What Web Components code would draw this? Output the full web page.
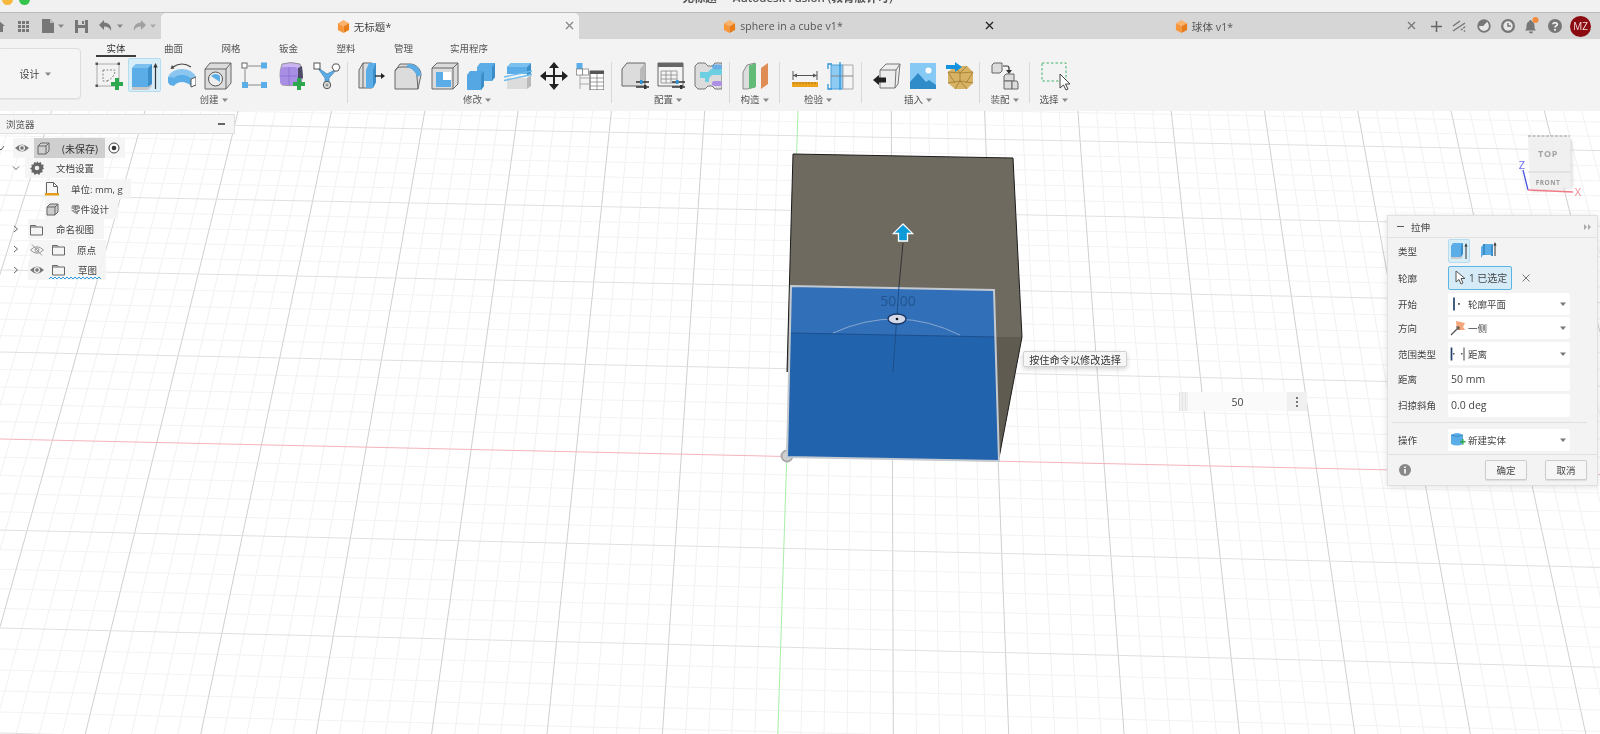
<!DOCTYPE html>
<html lang="zh">
<head>
<meta charset="utf-8">
<title>Autodesk Fusion</title>
<style>
  html, body { margin: 0; height: 100%; overflow: hidden; background: #fff; }
  body { font-family: "Open Sans", "Noto Sans CJK SC", sans-serif; color: #555; display: flex; flex-direction: column; width: 1600px; height: 734px; filter: blur(.3px); }
</style>
</head>
<body>
<fu-title-bar>无标题* - Autodesk Fusion (教育版许可)</fu-title-bar>

<fu-tab-bar>
  <fu-icon slot="quick" name="home" size="14" style="margin-left:-9px"></fu-icon>
  <fu-icon slot="quick" name="grid" size="13" style="margin-left:12px"></fu-icon>
  <fu-icon slot="quick" name="file" size="14" style="margin-left:11px"></fu-icon>
  <fu-icon slot="quick" name="caret" size="6" style="margin-left:3px"></fu-icon>
  <fu-icon slot="quick" name="save" size="13" style="margin-left:11px"></fu-icon>
  <fu-icon slot="quick" name="undo" size="14" style="margin-left:11px"></fu-icon>
  <fu-icon slot="quick" name="caret" size="6" style="margin-left:4px"></fu-icon>
  <fu-icon slot="quick" name="redo" size="14" style="margin-left:9px;opacity:.55"></fu-icon>
  <fu-icon slot="quick" name="caret" size="6" style="margin-left:4px;opacity:.55"></fu-icon>
  <fu-doc-tab active close="#888" width="418">无标题*</fu-doc-tab>
  <fu-doc-tab close="#222" width="420">sphere in a cube v1*</fu-doc-tab>
  <fu-doc-tab close="#777" width="422">球体 v1*</fu-doc-tab>
  <fu-icon slot="tray" name="plus" size="13" style="margin-left:8.500px"></fu-icon>
  <fu-icon slot="tray" name="sync" size="15" style="margin-left:9.500px"></fu-icon>
  <fu-icon slot="tray" name="gauge" size="14" style="margin-left:10px"></fu-icon>
  <fu-icon slot="tray" name="clock" size="14" style="margin-left:10px"></fu-icon>
  <fu-icon slot="tray" name="bell" size="18" style="margin-left:7px"></fu-icon>
  <fu-icon slot="tray" name="help" size="14" style="margin-left:7.500px"></fu-icon>
  <fu-avatar slot="tray" style="margin-left:8.500px">MZ</fu-avatar>
</fu-tab-bar>

<fu-ribbon>
  <fu-ribbon-tab slot="tabs" active>实体</fu-ribbon-tab>
  <fu-ribbon-tab slot="tabs">曲面</fu-ribbon-tab>
  <fu-ribbon-tab slot="tabs">网格</fu-ribbon-tab>
  <fu-ribbon-tab slot="tabs">钣金</fu-ribbon-tab>
  <fu-ribbon-tab slot="tabs">塑料</fu-ribbon-tab>
  <fu-ribbon-tab slot="tabs">管理</fu-ribbon-tab>
  <fu-ribbon-tab slot="tabs" style="margin-left:8px">实用程序</fu-ribbon-tab>

  <fu-tool-group label="创建" style="--w:253px;--pl:0px;--lp:15px">
    <fu-icon name="sketch"></fu-icon><fu-tool-active><fu-icon name="extrude"></fu-icon></fu-tool-active><fu-icon name="revolve"></fu-icon><fu-icon name="hole"></fu-icon><fu-icon name="pattern"></fu-icon><fu-icon name="form"></fu-icon><fu-icon name="joint"></fu-icon>
  </fu-tool-group>
  <fu-tool-group label="修改" style="--w:264px;--pl:10px">
    <fu-icon name="press"></fu-icon><fu-icon name="fillet"></fu-icon><fu-icon name="shell"></fu-icon><fu-icon name="combine"></fu-icon><fu-icon name="split"></fu-icon><fu-icon name="move"></fu-icon><fu-icon name="params"></fu-icon>
  </fu-tool-group>
  <fu-tool-group label="配置" style="--w:118px;--pl:9px">
    <fu-icon name="config"></fu-icon><fu-icon name="table"></fu-icon><fu-icon name="script"></fu-icon>
  </fu-tool-group>
  <fu-tool-group label="构造" style="--w:50px;--pl:12px;--lp:0px">
    <fu-icon name="plane"></fu-icon>
  </fu-tool-group>
  <fu-tool-group label="检验" style="--w:82px;--pl:11px">
    <fu-icon name="measure"></fu-icon><fu-icon name="section"></fu-icon>
  </fu-tool-group>
  <fu-tool-group label="插入" style="--w:118px;--pl:11px">
    <fu-icon name="derive"></fu-icon><fu-icon name="image"></fu-icon><fu-icon name="mesh"></fu-icon>
  </fu-tool-group>
  <fu-tool-group label="装配" style="--w:50px;--pl:11px;--lp:0px">
    <fu-icon name="assemble"></fu-icon>
  </fu-tool-group>
  <fu-tool-group label="选择" plain style="--w:50px;--pl:11px;--lp:3px">
    <fu-icon name="select"></fu-icon>
  </fu-tool-group>
</fu-ribbon>

<fu-viewport>
  <fu-scene></fu-scene>

  <fu-browser title="浏览器">
    <fu-tree-row left="0" check>
      <fu-icon name="eye" size="14" style="margin-left:15px"></fu-icon>
      <fu-current style="margin-left:5px"><fu-icon name="body" size="13"></fu-icon><span style="margin-left:12px">(未保存)</span></fu-current>
      <fu-icon name="radio" size="12" style="margin-left:3px;margin-right:5px"></fu-icon>
    </fu-tree-row>
    <fu-tree-row left="25" chev>
      <fu-icon name="gear" size="14" style="margin-left:5px"></fu-icon>
      <span style="margin-left:12px;margin-right:10px">文档设置</span>
    </fu-tree-row>
    <fu-tree-row left="45">
      <fu-icon name="units" size="14"></fu-icon>
      <span style="margin-left:12px;margin-right:8px">单位: mm, g</span>
    </fu-tree-row>
    <fu-tree-row left="45">
      <fu-icon name="body2" size="13" style="margin-left:1px"></fu-icon>
      <span style="margin-left:12px;margin-right:9px">零件设计</span>
    </fu-tree-row>
    <fu-tree-row left="28" chev>
      <fu-icon name="folder" size="13" style="margin-left:2px"></fu-icon>
      <span style="margin-left:13px;margin-right:10px">命名视图</span>
    </fu-tree-row>
    <fu-tree-row left="30" chev>
      <fu-icon name="eyeoff" size="14"></fu-icon>
      <fu-icon name="folder" size="13" style="margin-left:8px"></fu-icon>
      <span style="margin-left:12px;margin-right:10px">原点</span>
    </fu-tree-row>
    <fu-tree-row left="28" chev wavy>
      <fu-icon name="eye" size="14" style="margin-left:2px"></fu-icon>
      <fu-icon name="folder" size="13" style="margin-left:8px"></fu-icon>
      <span style="margin-left:13px;margin-right:9px">草图</span>
    </fu-tree-row>
  </fu-browser>

  <fu-tooltip>按住命令以修改选择</fu-tooltip>
  <fu-length-input>50</fu-length-input>

  <fu-dialog title="拉伸">
    <fu-form-row label="类型" h="24">
      <fu-toggle-icon on><fu-icon name="typeA" size="18"></fu-icon></fu-toggle-icon>
      <fu-toggle-icon><fu-icon name="typeB" size="18"></fu-icon></fu-toggle-icon>
    </fu-form-row>
    <fu-form-row label="轮廓" h="24">
      <fu-selection>1 已选定</fu-selection>
    </fu-form-row>
    <fu-form-row label="开始" h="22"><fu-field drop><fu-icon slot="icon" name="startProfile" size="16"></fu-icon>轮廓平面</fu-field></fu-form-row>
    <fu-form-row label="方向" h="22"><fu-field drop><fu-icon slot="icon" name="direction" size="16"></fu-icon>一侧</fu-field></fu-form-row>
    <fu-form-row label="范围类型" h="23"><fu-field drop><fu-icon slot="icon" name="extent" size="16"></fu-icon>距离</fu-field></fu-form-row>
    <fu-form-row label="距离" h="23"><fu-field>50 mm</fu-field></fu-form-row>
    <fu-form-row label="扫掠斜角" h="23"><fu-field>0.0 deg</fu-field></fu-form-row>
    <fu-form-row label="操作" h="22" split><fu-field drop><fu-icon slot="icon" name="newBody" size="16"></fu-icon>新建实体</fu-field></fu-form-row>
    <fu-button slot="footer" style="margin-left:auto">确定</fu-button>
    <fu-button slot="footer" style="margin-left:18px">取消</fu-button>
  </fu-dialog>
</fu-viewport>

<script>
const BLUE = '#5aade6', BLUED = '#3b8ec8', GR = '#dcdcdc', GRD = '#b9b9b9', ST = '#666';
const PLUS = (x, y) => `<path d="M${x - 2} ${y - 6}h4v4h4v4h-4v4h-4v-4h-4v-4h4z" fill="#2ea84f"/>`;

// hand-drawn toolbar and tree icons, keyed by name
const ICONS = {
  home: `<svg viewBox="0 0 14 14"><path d="M7 1 14 7h-2v6H2V7H0z" fill="#777"/></svg>`,
  grid: `<svg viewBox="0 0 13 13" fill="#777"><path d="M1 1h3v3H1zM5 1h3v3H5zM9 1h3v3H9zM1 5h3v3H1zM5 5h3v3H5zM9 5h3v3H9zM1 9h3v3H1zM5 9h3v3H5zM9 9h3v3H9z"/></svg>`,
  file: `<svg viewBox="0 0 14 14"><path d="M1 0h8l4 4v10H1z" fill="#777"/><path d="M9 0v4h4z" fill="#bbb"/></svg>`,
  caret: `<svg viewBox="0 0 6 6"><path d="M0 1.500h6L3 5z" fill="#888"/></svg>`,
  save: `<svg viewBox="0 0 13 13"><path d="M0 0h13v13H0z" fill="#777"/><path d="M3 0h7v5H3zM3 8h7v5H3z" fill="#d6d6d6"/><path d="M7 1h2v3H7z" fill="#777"/></svg>`,
  undo: `<svg viewBox="0 0 14 14"><path d="M5 1 0 6l5 5V7.500c4 0 6 1.500 7 4.500 1-5-2-8-7-8.500z" fill="#777"/></svg>`,
  redo: `<svg viewBox="0 0 14 14"><path d="M9 1l5 5-5 5V7.500c-4 0-6 1.500-7 4.500-1-5 2-8 7-8.500z" fill="#777"/></svg>`,
  plus: `<svg viewBox="0 0 13 13"><path d="M6.500 1v11M1 6.500h11" stroke="#666" stroke-width="1.500"/></svg>`,
  sync: `<svg viewBox="0 0 15 15" fill="none" stroke="#777" stroke-width="1.500"><path d="M1 7 8 2M1 12 13 4"/><path d="M9 11l5-4M12 12.500l1-1" stroke-dasharray="2 1"/></svg>`,
  gauge: `<svg viewBox="0 0 14 14"><circle cx="7" cy="7" r="5.800" fill="#e6e6e6" stroke="#777" stroke-width="1.800"/><path d="M1 7a6 6 0 0 1 6-6l4 2-4 4z" fill="#777"/><path d="M7 7l3.500-3.500" stroke="#eee" stroke-width="1.200"/></svg>`,
  clock: `<svg viewBox="0 0 14 14"><circle cx="7" cy="7" r="7" fill="#777"/><circle cx="7" cy="7" r="4.700" fill="#e8e8e8"/><path d="M7 4v3.200h3" stroke="#666" stroke-width="1.300" fill="none"/></svg>`,
  bell: `<svg viewBox="0 0 18 18"><path d="M7 4.500c-2.500 1-2.500 3.500-2.500 5.500 0 2-1 3-1.500 3.500h11c-.5-.5-1.500-1.500-1.500-3.500 0-2.500 0-4.500-2.500-5.500a1.500 1.500 0 0 0-3 0zM7 14.500h4a2 2 0 0 1-4 0z" fill="#777"/><circle cx="13.500" cy="3" r="3" fill="#f58a3c"/></svg>`,
  help: `<svg viewBox="0 0 14 14"><circle cx="7" cy="7" r="7" fill="#777"/><path d="M4.800 5.300C5 3.300 9.300 3.300 9.300 5.500 9.300 7 7 7 7 8.600" fill="none" stroke="#fff" stroke-width="1.500"/><circle cx="7" cy="10.700" r="1" fill="#fff"/></svg>`,
  sketch: `<svg viewBox="0 0 28 28"><path d="M2 2h22v22H2z" fill="none" stroke="#aaa"/><g fill="#555"><rect x="0.500" y="0.500" width="2.500" height="2.500"/><rect x="22.500" y="0.500" width="2.500" height="2.500"/><rect x="0.500" y="22.500" width="2.500" height="2.500"/></g><path d="M8 8v11h6M8 8h12c0 5-3 9-8 11" fill="none" stroke="#888" stroke-dasharray="2 1.500"/>${PLUS(22, 22)}</svg>`,
  extrude: `<svg viewBox="0 0 28 28"><path d="M1 6l4-4h16v20l-4 3H1z" fill="${BLUE}"/><path d="M17 6l4-4v20l-4 3z" fill="${BLUED}"/><path d="M1 6l4-4h16l-4 4z" fill="#7cc0ee"/><path d="M1 25h16l4-3v2l-4 4H1z" fill="#c8c8c8"/><path d="M24.500 27V4" stroke="#333" stroke-width="1.200"/><path d="M24.500 1l2.200 4.500h-4.400z" fill="#333"/></svg>`,
  revolve: `<svg viewBox="0 0 28 28"><path d="M5 5Q14 -1 23 5" fill="none" stroke="#444" stroke-width="1.200"/><path d="M4 3l-1.500 4 4-.5z" fill="#444"/><path d="M0 15Q4 7 14 7q10 0 14 8l-5 2q-3-4-9-4-6 0-9 4z" fill="#8ac6ef"/><path d="M0 15v5q0 1 2 3l4 1c.5-3 0-5-1-7q3-4 9-4 6 0 9 4l0 8 0-8" fill="${BLUE}"/><path d="M5 17q3-4 9-4 6 0 9 4v7c-3-3-6-4-9-4s-6 1-8 4l-1-2z" fill="${BLUE}"/><path d="M23 17l5-2v8l-5 2z" fill="#fff" stroke="#555"/></svg>`,
  hole: `<svg viewBox="0 0 28 28"><path d="M1 7l5-6h21v20l-5 6H1z" fill="${GR}" stroke="${ST}"/><path d="M1 7h21v20M22 7l5-6" fill="none" stroke="${ST}"/><circle cx="11.500" cy="17" r="7" fill="#eee" stroke="#555"/><path d="M7 14a6 6 0 0 1 9 0l0 6z" fill="${BLUE}"/></svg>`,
  pattern: `<svg viewBox="0 0 28 28"><path d="M7 4h13M4 7v13M7 23h13" stroke="#888" stroke-width="1"/><rect x="1" y="1" width="5" height="5" fill="#fff" stroke="#666"/><rect x="20" y="0.500" width="6" height="6" fill="${BLUE}"/><rect x="1" y="20" width="6" height="6" fill="${BLUE}"/><rect x="20" y="20" width="6" height="6" fill="${BLUE}"/></svg>`,
  form: `<svg viewBox="0 0 28 28"><path d="M5 2q9-3 18 0 4 9 1 20-10 3-19 1-4-10 0-21z" fill="#c9b5f0" stroke="#777" stroke-width=".7"/><path d="M3 9q1-4 4-4h11q3 0 3 4v11q0 3-3 3H7q-4 0-4-3z" fill="#a98fe4"/><path d="M3 14h18M12 5v18" stroke="#8c70d0" stroke-width=".8"/><path d="M21 6l4-2 1 12-5 2z" fill="#4c4a66"/>${PLUS(22, 22)}</svg>`,
  joint: `<svg viewBox="0 0 28 28"><path d="M4 5 14 12l10-5-8 9v5h-4v-5z" fill="${BLUE}" stroke="#3a7fb0" stroke-width=".7"/><rect x="1" y="1" width="6" height="6" fill="#fff" stroke="#555"/><path d="M21 2h4l2 3-2 4h-4l-2-4z" fill="#fff" stroke="#555"/><circle cx="14" cy="23" r="3.700" fill="#ddd" stroke="#555"/><circle cx="14" cy="23" r="1.500" fill="#999"/></svg>`,
  press: `<svg viewBox="0 0 28 28"><path d="M1 8l4-7h9v25H1z" fill="#ddd" stroke="${ST}"/><path d="M5 1v25" stroke="${ST}" fill="none"/><path d="M8 26V8l3-7h7v19l-3 6z" fill="${BLUE}"/><path d="M15 8l3-7v19l-3 6z" fill="${BLUED}"/><path d="M17 14h7" stroke="#222" stroke-width="1.300"/><path d="M23 11l4 3-4 3z" fill="#222"/></svg>`,
  fillet: `<svg viewBox="0 0 28 28"><path d="M1 9l5-7h10c6 0 11 5 11 11l-3 14H1z" fill="${GR}" stroke="${ST}"/><path d="M1 9Q2 5 8 5h4c7 0 11 4 11 10l1 12" fill="none" stroke="${ST}"/><path d="M12 5c1-2 2-3 4-3 6 0 11 5 11 11l-4 2c-1-5-5-9-11-10z" fill="${BLUE}"/></svg>`,
  shell: `<svg viewBox="0 0 28 28"><path d="M1 6l5-5h21v21l-5 5H1z" fill="${GR}" stroke="${ST}"/><path d="M5 10h15v15H5z" fill="#fff"/><path d="M5 10h7v8h8v7H5z" fill="${BLUE}"/><path d="M1 6h21v21M22 6l5-5" fill="none" stroke="${ST}"/></svg>`,
  combine: `<svg viewBox="0 0 28 28"><path d="M10 5l3-4h15v14l-3 4H10z" fill="${BLUE}"/><path d="M25 5l3-4v14l-3 4z" fill="${BLUED}"/><path d="M0 13l3-4h14v15l-3 4H0z" fill="#54a7e2"/><path d="M14 13l3-4v15l-3 4z" fill="${BLUED}"/></svg>`,
  split: `<svg viewBox="0 0 28 28"><path d="M3 5l4-4h20v11H3z" fill="${BLUE}"/><path d="M23 5l4-4v10l-4 3z" fill="${BLUED}"/><path d="M3 5l4-4h20l-4 4z" fill="#7cc0ee"/><path d="M3 16h20v11H3z" fill="${GR}"/><path d="M23 16l4-3v11l-4 3z" fill="${GRD}"/><path d="M0 15 28 9M0 18.500l28-6" stroke="#6cbcec" stroke-width="1.400"/></svg>`,
  move: `<svg viewBox="0 0 28 28"><path d="M14 3v22M3 14h22" stroke="#222" stroke-width="2"/><path d="M14 0l5 6H9zM14 28l5-6H9zM0 14l6-5v10zM28 14l-6-5v10z" fill="#222"/></svg>`,
  params: `<svg viewBox="0 0 28 28"><path d="M4 10v17M4 16h9M4 22h9" stroke="#aaa"/><rect x="0.500" y="1" width="6" height="6" fill="${BLUE}"/><rect x="0.500" y="7" width="6" height="6" fill="#fff" stroke="#777" stroke-width=".7"/><rect x="6.500" y="7" width="6" height="6" fill="#fff" stroke="#777" stroke-width=".7"/><path d="M14 9h14v19H14z" fill="#fff" stroke="#555"/><path d="M14 9h14v3H14z" fill="#555"/><path d="M14 16h14M14 20h14M14 24h14M21 12v16" stroke="#777" stroke-width=".7"/></svg>`,
  config: `<svg viewBox="0 0 28 28"><path d="M1 7l5-6h18v23H1z" fill="${GR}" stroke="${ST}"/><path d="M19 7l5-6v16l-5 2z" fill="${GRD}"/><path d="M15 20h13M15 25h13" stroke="#333" stroke-width="1.500"/><path d="M19 18h2.500v4H19z" fill="#2c94d8"/><path d="M23 23h2.500v4H23z" fill="#333"/></svg>`,
  table: `<svg viewBox="0 0 28 28"><path d="M1 1h25v23H1z" fill="#f4f4f4" stroke="#666"/><path d="M1 1h25v4H1z" fill="#666"/><path d="M4 9h16v12H4zM4 13h16M4 17h16M9 9v12M14 9v12" fill="none" stroke="#888" stroke-width=".8"/><path d="M15 20h13M15 25h13" stroke="#333" stroke-width="1.500"/><path d="M19 18h2.500v4H19z" fill="#2c94d8"/><path d="M23 23h2.500v4H23z" fill="#333"/></svg>`,
  script: `<svg viewBox="0 0 28 28"><path d="M1 4l3-3h7l3 3h4l3-3h7v26h-7l-3-3h-4l-3 3H4l-3-3z" fill="${GR}" stroke="#777"/><path d="M6 10h8l3-3h11v6H18l-3 3v4H11v-4H6z" fill="#6dd0e2"/><rect x="18" y="2.500" width="10" height="5" rx="2.500" fill="#6aaee6"/><rect x="18" y="19" width="10" height="5" rx="2.500" fill="#ad8fe6"/></svg>`,
  plane: `<svg viewBox="0 0 28 28"><path d="M1 10 5 3l8-2v24l-8 2H1z" fill="#ddd" stroke="#777" stroke-width=".8"/><path d="M7 3.500 14 1v24l-7 2z" fill="#63bb78"/><path d="M19 6l7-5v21l-7 5z" fill="#e08d55"/></svg>`,
  measure: `<svg viewBox="0 0 28 28"><path d="M2 9v9M26 9v9" stroke="#555"/><path d="M2 13.500h24" stroke="#555"/><path d="M2 13.500l4-2v4zM26 13.500l-4-2v4z" fill="#555"/><path d="M1 20h26v5H1z" fill="#eda21c"/><path d="M3 20v2M6 20v2M9 20v2M12 20v2M15 20v2M18 20v2M21 20v2M24 20v2" stroke="#8a5a10" stroke-width=".6"/></svg>`,
  section: `<svg viewBox="0 0 28 28"><path d="M4 3h12v24H4z" fill="#8ecbf3" stroke="#4a9fd6"/><path d="M16 3h10v24H16z" fill="#f4f4f4" stroke="#aaa"/><path d="M4 14h22" stroke="#888"/><path d="M5 2H1v5M5 27H1v-5" fill="none" stroke="#2c94d8" stroke-width="1.300"/><path d="M13 0v28" stroke="#2c94d8" stroke-width="1.300"/></svg>`,
  derive: `<svg viewBox="0 0 28 28"><path d="M7 8l6-6h14l-2 20-3 4H7z" fill="#eee" stroke="#777"/><path d="M7 8h16l-1 18M23 8l4-6" fill="none" stroke="#777"/><path d="M0 18l6-5v2.500h7v5H6V23z" fill="#222"/></svg>`,
  image: `<svg viewBox="0 0 28 28"><path d="M1 1h26v26H1z" fill="#87c9f5"/><circle cx="19.500" cy="8.500" r="3" fill="#fff"/><path d="M1 27V20l8-9 8 9 3-2 7 5v4z" fill="#2f8cc9"/></svg>`,
  mesh: `<svg viewBox="0 0 28 28"><path d="M9 4h12l6 6v11l-6 6H9l-7-6V10z" fill="#d8b264"/><path d="M9 4l5 7 7-7M2 10l12 1 13-1M2 21l12-2 13 2M14 11v8M9 27l5-8 7 8M2 10l7 11M27 10l-7 11" stroke="#96722b" stroke-width=".7" fill="none"/><path d="M0 3h9V0l7 5-7 5V7H0z" fill="#1592e0"/></svg>`,
  assemble: `<svg viewBox="0 0 28 28"><path d="M1 3l2-2h8v8l-2 2H1z" fill="${GR}" stroke="#666"/><path d="M12 4h4q2 0 2 2v3" fill="none" stroke="#333" stroke-width="1.200"/><path d="M15 8h6l-3 4z" fill="#333"/><path d="M13 14l2-2h8v7H13z" fill="${GR}" stroke="#666"/><path d="M13 19h8v8H13z" fill="${GR}" stroke="#666"/><path d="M21 19h5l1 2v6h-6z" fill="${GR}" stroke="#666"/></svg>`,
  select: `<svg viewBox="0 0 28 28" overflow="visible"><rect x="1" y="1" width="24" height="18" fill="none" stroke="#45b36b" stroke-dasharray="2.500 2"/><path d="M19 12v14l3.500-3 2.500 5 2-1-2.500-5h4.500z" fill="#fff" stroke="#444"/></svg>`,
  eye: `<svg viewBox="0 0 14 14"><path d="M0 7q7-7 14 0-7 7-14 0z" fill="#777"/><circle cx="7" cy="7" r="3" fill="#eee"/><circle cx="7" cy="7" r="1.800" fill="#777"/></svg>`,
  eyeoff: `<svg viewBox="0 0 14 14" fill="none" stroke="#999"><path d="M.5 7q6.500-6.500 13 0-6.500 6.500-13 0z"/><circle cx="7" cy="7" r="2"/><path d="M2 1.500l10 11"/></svg>`,
  body: `<svg viewBox="0 0 13 13" fill="none" stroke="#666"><path d="M1 4 4 1h8v8l-3 3H1zM1 4h8v8M9 4l3-3"/></svg>`,
  body2: `<svg viewBox="0 0 13 13"><path d="M1 4 4 1h8v8l-3 3H1z" fill="#ccc" stroke="#666"/><path d="M1 4h8v8M9 4l3-3" fill="none" stroke="#666"/></svg>`,
  radio: `<svg viewBox="0 0 12 12"><circle cx="6" cy="6" r="5" fill="#fff" stroke="#444"/><circle cx="6" cy="6" r="2.300" fill="#333"/></svg>`,
  gear: `<svg viewBox="0 0 14 14"><path d="M7 0l1.500 2 2.300-1 .6 2.500 2.400.3-.8 2.300L14 7.500l-1.900 1.400.6 2.400-2.400.4-1 2.300L7 12.600l-2.300 1.400-1-2.300-2.400-.4.6-2.400L0 7.500l2-1.400-.8-2.300 2.400-.3.6-2.500 2.300 1z" fill="#666"/><circle cx="7" cy="7" r="2.300" fill="#eee"/></svg>`,
  units: `<svg viewBox="0 0 14 14"><path d="M1.500.5h7l4 4V12h-11z" fill="#f6f6f6" stroke="#666"/><path d="M8.500.5v4h4" fill="none" stroke="#666"/><path d="M0 11h14v2.500H0z" fill="#e49c1a"/></svg>`,
  folder: `<svg viewBox="0 0 13 13" fill="none" stroke="#666"><path d="M.5 2.500h5l1 1.500h6v8H.5z"/><path d="M.5 4h6"/></svg>`,
  typeA: `<svg viewBox="0 0 18 18"><path d="M1 4l2-3h10v11l-2 3H1z" fill="${BLUE}"/><path d="M11 4l2-3v11l-2 3z" fill="${BLUED}"/><path d="M1 15h10l2-3v2l-2 3H1z" fill="#ccc"/><path d="M16 17V4" stroke="#333"/><path d="M16 1l1.500 3.500h-3z" fill="#333"/></svg>`,
  typeB: `<svg viewBox="0 0 18 18"><path d="M2 5l3-3h9v11H4l-2 3z" fill="${BLUE}"/><path d="M5 2v11" stroke="${BLUED}" stroke-width="2"/><path d="M12 3h2v11h-2z" fill="${BLUED}"/><path d="M16 14V3" stroke="#333"/><path d="M16 0l1.500 3.500h-3z" fill="#333"/></svg>`,
  startProfile: `<svg viewBox="0 0 16 16"><path d="M4 1.500v13" stroke="#24406b" stroke-width="1.700"/><rect x="8" y="7" width="1.800" height="1.800" fill="#555"/></svg>`,
  direction: `<svg viewBox="0 0 16 16"><path d="M6 1l9 2-2 4 2 3-8 0z" fill="#f3a67a"/><path d="M1 15 9 7" stroke="#555" stroke-width="1.200"/><path d="M9 7v3M9 7H6" stroke="#555"/></svg>`,
  extent: `<svg viewBox="0 0 16 16"><path d="M1.500 1.500v13" stroke="#24406b" stroke-width="1.700"/><path d="M14 1.500v13" stroke="#444"/><rect x="3" y="7" width="1.500" height="1.500" fill="#555"/><rect x="11" y="7" width="1.500" height="1.500" fill="#555"/></svg>`,
  newBody: `<svg viewBox="0 0 16 16"><path d="M1 3q6-4 12 0v9q-6 3-12 0z" fill="${BLUE}"/><path d="M1 3q6 3 12 0" stroke="#3b8ec8" fill="none"/><path d="M10 9h2V7h1.500v2h2v1.500h-2v2H12v-2h-2z" fill="#2ea84f"/></svg>`,
  cube: `<svg viewBox="0 0 14 14"><path d="M7 0l6 3.500-6 3.300L1 3.500z" fill="#fbb26b"/><path d="M1 3.500l6 3.300V14l-6-3.300z" fill="#f8963a"/><path d="M13 3.500 7 6.800V14l6-3.300z" fill="#e87c18"/></svg>`
};

class FuIcon extends HTMLElement {
  connectedCallback() {
    const size = this.getAttribute('size') || 28;
    const root = this.shadowRoot || this.attachShadow({ mode: 'open' });
    root.innerHTML = `<style>:host{display:block;flex:none;width:${size}px;height:${size}px}svg{display:block;width:100%;height:100%}</style>${ICONS[this.getAttribute('name')] || ''}`;
  }
}

class FuTitleBar extends HTMLElement {
  constructor() {
    super();
    this.attachShadow({ mode: 'open' }).innerHTML = `
      <style>
        :host { display:flex; flex:none; height:13px; background:#f1f1f1; border-bottom:1px solid #bcbcbc; box-sizing:border-box; overflow:hidden; position:relative; }
        .light { width:11px; height:11px; border-radius:50%; margin-top:-6px; flex:none; }
        .y { background:#f6b73c; margin-left:2px; }
        .g { background:#35c44b; margin-left:6px; }
        .t { position:absolute; left:0; right:25px; top:-9px; text-align:center; font-size:11.500px; line-height:14px; font-weight:600; color:#555; }
      </style>
      <span class="light y"></span><span class="light g"></span>
      <div class="t"><slot></slot></div>`;
  }
}

class FuTabBar extends HTMLElement {
  constructor() {
    super();
    this.attachShadow({ mode: 'open' }).innerHTML = `
      <style>
        :host { display:flex; flex:none; height:26px; background:#d6d6d6; align-items:stretch; }
        .q { display:flex; align-items:center; width:161px; flex:none; overflow:hidden; box-sizing:border-box; }
        .d { display:flex; flex:none; }
        .r { display:flex; align-items:center; flex:1; }
      </style>
      <div class="q"><slot name="quick"></slot></div>
      <div class="d"><slot></slot></div>
      <div class="r"><slot name="tray"></slot></div>`;
  }
}

class FuDocTab extends HTMLElement {
  connectedCallback() {
    const active = this.hasAttribute('active');
    const close = this.getAttribute('close');
    this.attachShadow({ mode: 'open' }).innerHTML = `
      <style>
        :host { display:flex; width:${this.getAttribute('width')}px; box-sizing:border-box; padding-right:12px; align-items:center; justify-content:center; position:relative; font-size:10.500px; letter-spacing:.1px; color:${active ? '#444' : '#555'}; background:${active ? '#f3f3f3' : 'transparent'}; border-radius:5px 5px 0 0; }
        fu-icon { margin-right:4px; }
        .wrap { display:flex; align-items:center; }
        .x { position:absolute; right:5px; top:8px; width:9px; height:9px; }
      </style>
      <div class="wrap"><fu-icon name="cube" size="13"></fu-icon><slot></slot></div>
      <svg class="x" viewBox="0 0 9 9"><path d="M1 1l7 7M8 1 1 8" stroke="${close}" stroke-width="1.300"/></svg>`;
  }
}

class FuAvatar extends HTMLElement {
  constructor() {
    super();
    this.attachShadow({ mode: 'open' }).innerHTML = `
      <style>:host{display:flex;flex:none;width:21px;height:21px;border-radius:50%;background:#8b0b10;color:#f4dcdc;font-size:10px;align-items:center;justify-content:center}</style><slot></slot>`;
  }
}

class FuRibbon extends HTMLElement {
  constructor() {
    super();
    this.attachShadow({ mode: 'open' }).innerHTML = `
      <style>
        :host { display:flex; flex:none; height:72px; background:#f3f3f3; }
        .design { flex:none; box-sizing:border-box; width:84px; height:51px; margin:9px 0 0 -3px; border:1px solid #dedede; border-radius:4px; background:#f5f5f5; box-shadow:0 1px 1px #e6e6e6; display:flex; align-items:center; justify-content:center; font-size:10px; color:#444; padding-right:8px; }
        .design svg { width:6px; height:6px; margin-left:5px; }
        .main { padding-left:14px; }
        .tabs { display:flex; gap:17.500px; height:18px; margin-left:1px; }
        .groups { display:flex; height:46px; margin-top:1px; }
      </style>
      <div class="design">设计<svg viewBox="0 0 6 6"><path d="M0 1.500h6L3 5z" fill="#888"/></svg></div>
      <div class="main">
        <div class="tabs"><slot name="tabs"></slot></div>
        <div class="groups"><slot></slot></div>
      </div>`;
  }
}

class FuRibbonTab extends HTMLElement {
  connectedCallback() {
    const on = this.hasAttribute('active');
    this.attachShadow({ mode: 'open' }).innerHTML = `
      <style>:host{display:block;width:40px;box-sizing:border-box;height:18px;text-align:center;font-size:9.500px;line-height:19px;color:${on ? '#333' : '#555'};white-space:nowrap;${on ? 'border-bottom:2px solid #3c3c3c;' : ''}}</style><slot></slot>`;
  }
}

class FuToolGroup extends HTMLElement {
  connectedCallback() {
    const plain = this.hasAttribute('plain');
    this.attachShadow({ mode: 'open' }).innerHTML = `
      <style>
        :host { display:block; flex:none; box-sizing:border-box; width:var(--w); height:41px; margin-top:4px; position:relative; ${plain ? '' : 'border-right:1px solid #d8d8d8;'} }
        .tools { display:flex; gap:8.400px; padding-left:var(--pl); height:31px; }
        .lab { text-align:center; font-size:9.500px; line-height:12px; color:#555; padding-right:var(--lp,5px); margin-top:1px; white-space:nowrap; }
        .lab svg { width:6px; height:6px; margin-left:3px; }
      </style>
      <div class="tools"><slot></slot></div>
      <div class="lab">${this.getAttribute('label')}<svg viewBox="0 0 6 6"><path d="M0 1.500h6L3 5z" fill="#888"/></svg></div>`;
  }
}

class FuToolActive extends HTMLElement {
  constructor() {
    super();
    this.attachShadow({ mode: 'open' }).innerHTML = `
      <style>
        :host { display:block; position:relative; width:28px; height:28px; }
        .bg { position:absolute; left:-3.500px; top:-4px; width:33px; height:34px; box-sizing:border-box; background:#d7edf8; border:1px solid #b5ddf0; border-radius:2px; }
        ::slotted(*) { position:relative; }
      </style>
      <div class="bg"></div><slot></slot>`;
  }
}

class FuViewport extends HTMLElement {
  constructor() {
    super();
    this.attachShadow({ mode: 'open' }).innerHTML = `
      <style>:host{display:block;flex:1;position:relative;background:#fff;overflow:hidden}</style><slot></slot>`;
  }
}

// ground grid and the extruded body, in page coordinates
class FuScene extends HTMLElement {
  connectedCallback() {
    const VY = -2517, VX = 883;
    const lineV = x111 => {
      const at = y => VX + (x111 - VX) * (y - VY) / (111 - VY);
      return [at(111), 111, at(734), 734];
    };
    const rows = [51, 121, 195, 270, 352, 439, 530, 628, 733];
    const lineH = y0 => [0, y0, 1600, y0 + (0.0171 + 1.18e-5 * y0) * 1600];
    const seg = (l, c) => `<line x1="${l[0].toFixed(1)}" y1="${l[1].toFixed(1)}" x2="${l[2].toFixed(1)}" y2="${l[3].toFixed(1)}" stroke="${c}"/>`;

    let minor = '', major = '';
    for (let k = -12; k <= 12; k++) {
      for (let j = 1; j < 5; j++) minor += seg(lineV(798 + 93.3 * (k + j / 5)), '#f1f1f1');
      if (k !== 0) major += seg(lineV(798 + 93.3 * k), '#d0d0d0');
    }
    rows.forEach((y0, i) => {
      if (y0 !== 439) major += seg(lineH(y0), '#e0e0e0');
      if (i < rows.length - 1) {
        for (let j = 1; j < 5; j++) minor += seg(lineH(y0 + (rows[i + 1] - y0) * j / 5), '#f3f3f3');
      }
    });

    this.attachShadow({ mode: 'open' }).innerHTML = `
      <style>
        :host { display:block; position:absolute; inset:0; }
        svg { display:block; width:1600px; height:623px; }
        text { font-family:"Open Sans","Liberation Sans",sans-serif; }
      </style>
      <svg viewBox="0 111 1600 623">
        <defs><filter id="s" x="-20%" y="-20%" width="140%" height="140%"><feGaussianBlur stdDeviation="1.500"/></filter></defs>
        <g stroke-width="1">${minor}${major}</g>
        ${seg(lineH(439), '#f4b4bb')}
        ${seg(lineV(798), '#a8eea8')}
        <polygon points="793,154 1013,158 1022,337 994,337 787,372" fill="#6f6a5f"/>
        <polygon points="1022,337 999,458 994,337" fill="#5f5b51"/>
        <path d="M787 372 793 154 1013 158 1022 337 999 458" fill="none" stroke="#1c1c1c" stroke-width="1"/>
        <path d="M903 243 899 286" stroke="#333" stroke-width="1"/>
        <circle cx="787" cy="456" r="5.500" fill="#d0d0d0" stroke="#aaa" stroke-width="2"/>
        <polygon points="791,286 994,290 995,337 790,333" fill="#316fb9"/>
        <polygon points="790,333 995,337 999,461 787,457" fill="#2263ad"/>
        <path d="M790 333 995 337" stroke="#1a4f90" stroke-width="1"/>
        <polygon points="791,286 994,290 999,461 787,457" fill="none" stroke="#c3c9d0" stroke-width="2"/>
        <path d="M899 286 893 372" stroke="#1d4f8a" stroke-width="1"/>
        <path d="M833 333Q897 304 960 335" fill="none" stroke="#9db4d4" stroke-width=".8"/>
        <text x="898" y="306" text-anchor="middle" font-size="14" fill="#22558f">50.00</text>
        <ellipse cx="897" cy="319" rx="9" ry="5" fill="#d3d9e8" stroke="#1a3766" stroke-width="1.400"/>
        <circle cx="897" cy="319" r="1.300" fill="#111"/>
        <path d="M903 224 893 233.500h5.500V241h9v-7.500h5.500z" fill="#0d9ad8" stroke="#fff" stroke-width="1.300"/>
        <path d="M891 235 903 222 915 235" fill="none" stroke="#555" stroke-width=".5"/>
        <polygon points="1530,140 1572,140 1573,188 1532,192" fill="#999" opacity=".3" filter="url(#s)"/>
        <polygon points="1528,136 1570,136 1571,188 1530,190" fill="#f0f0f0" opacity=".95"/>
        <path d="M1528 136h42" stroke="#999" stroke-dasharray="3 1.500"/>
        <path d="M1528 172h43" stroke="#d4d4d4"/>
        <text x="1548" y="157" text-anchor="middle" font-size="9" font-weight="700" fill="#a5a5a5" letter-spacing=".6">TOP</text>
        <text x="1548" y="184.500" text-anchor="middle" font-size="6.500" font-weight="700" fill="#999" letter-spacing=".5">FRONT</text>
        <path d="M1523 170 1528 190" stroke="#4a55e0" stroke-width="1.300"/>
        <path d="M1528 190 1573 192" stroke="#ef7a86" stroke-width="1.300"/>
        <text x="1522" y="169" text-anchor="middle" font-size="11" fill="#6a72ee">Z</text>
        <text x="1578" y="196" text-anchor="middle" font-size="11" fill="#f08a94">X</text>
      </svg>`;
  }
}

class FuBrowser extends HTMLElement {
  connectedCallback() {
    this.attachShadow({ mode: 'open' }).innerHTML = `
      <style>
        :host { display:block; position:absolute; left:0; top:3px; width:235px; font-size:9.500px; color:#444; }
        .h { height:20px; box-sizing:border-box; background:#f5f5f5; border:1px solid #dfdfdf; border-left:0; display:flex; align-items:center; justify-content:space-between; padding:0 8px 0 6px; color:#555; }
        .m { width:7px; height:1.500px; background:#666; margin-right:1px; }
        .b { padding-top:4px; }
      </style>
      <div class="h"><span>${this.getAttribute('title')}</span><span class="m"></span></div>
      <div class="b"><slot></slot></div>`;
  }
}

class FuTreeRow extends HTMLElement {
  connectedCallback() {
    const chev = this.hasAttribute('chev');
    const check = this.hasAttribute('check');
    const wavy = this.hasAttribute('wavy');
    const open = this.querySelector('[name=gear]');
    const bg = check ? 'transparent' : 'rgba(244,244,244,.9)';
    this.attachShadow({ mode: 'open' }).innerHTML = `
      <style>
        :host { display:flex; height:20.300px; align-items:center; position:relative; white-space:nowrap; }
        .pill { display:flex; align-items:center; height:20px; margin-left:${this.getAttribute('left')}px; background:${bg}; position:relative; }
        .mark { position:absolute; left:0; top:0; width:24px; height:20px; }
        .wavy { position:absolute; left:49px; top:16px; width:54px; height:4px; }
        ${check ? '.pill{background:linear-gradient(90deg,transparent 13px,rgba(244,244,244,.9) 13px)}' : ''}
      </style>
      <div class="pill"><slot></slot></div>
      ${chev ? `<svg class="mark" viewBox="0 0 24 20"><path d="${open ? 'M13 8.500l3 3 3-3' : 'M14 7l3.500 3-3.500 3'}" fill="none" stroke="#666"/></svg>` : ''}
      ${check ? '<svg class="mark" viewBox="0 0 24 20"><path d="M-1 10l2 2 3-4" fill="none" stroke="#666"/></svg>' : ''}
      ${wavy ? '<svg class="wavy" viewBox="0 0 54 4"><path d="M0 3l2-2 2 2 2-2 2 2 2-2 2 2 2-2 2 2 2-2 2 2 2-2 2 2 2-2 2 2 2-2 2 2 2-2 2 2 2-2 2 2 2-2 2 2 2-2 2 2 2-2 2 2" fill="none" stroke="#2a9be0" stroke-width="1"/></svg>' : ''}`;
  }
}

class FuCurrent extends HTMLElement {
  constructor() {
    super();
    this.attachShadow({ mode: 'open' }).innerHTML = `
      <style>:host{display:flex;align-items:center;height:20px;background:#cfcfcf;padding:0 7px 0 3px;font-size:10px;color:#333}</style><slot></slot>`;
  }
}

class FuTooltip extends HTMLElement {
  constructor() {
    super();
    this.attachShadow({ mode: 'open' }).innerHTML = `
      <style>:host{position:absolute;left:1023px;top:240px;display:flex;align-items:center;justify-content:center;box-sizing:border-box;width:104px;height:16px;background:#f6f6f6;border:1px solid #d2d2d2;border-radius:2px;box-shadow:0 2px 5px rgba(0,0,0,.18);font-size:10.200px;color:#333;white-space:nowrap}</style><slot></slot>`;
  }
}

class FuLengthInput extends HTMLElement {
  constructor() {
    super();
    this.attachShadow({ mode: 'open' }).innerHTML = `
      <style>
        :host { position:absolute; left:1179px; top:281px; width:128px; height:19px; display:flex; background:#f0f0f0; font-size:10.500px; color:#444; }
        .g { width:9px; background:repeating-linear-gradient(90deg,#e4e4e4 0 1px,#f0f0f0 1px 3px); }
        .v { width:99px; background:#fafafa; display:flex; align-items:center; justify-content:center; }
        .d { flex:1; display:flex; flex-direction:column; align-items:center; justify-content:center; gap:2px; }
        .d i { width:2px; height:2px; background:#777; display:block; }
      </style>
      <div class="g"></div><div class="v"><slot></slot></div><div class="d"><i></i><i></i><i></i></div>`;
  }
}

class FuDialog extends HTMLElement {
  connectedCallback() {
    this.attachShadow({ mode: 'open' }).innerHTML = `
      <style>
        :host { position:absolute; left:1387px; top:104px; width:211px; height:271px; box-sizing:border-box; display:flex; flex-direction:column; background:#f3f3f3; border:1px solid #e0e0e0; box-shadow:0 1px 6px rgba(0,0,0,.12); font-size:9.500px; color:#444; }
        .h { height:21px; flex:none; display:flex; align-items:center; border-bottom:1px solid #e2e2e2; padding:0 6px 0 9px; font-size:9.500px; }
        .m { width:7px; height:1.500px; background:#555; margin-right:7px; }
        .more { margin-left:auto; width:7px; height:6px; }
        .b { padding:1px 0 0; flex:1; }
        .f { height:30px; flex:none; border-top:1px solid #e0e0e0; display:flex; align-items:center; padding:0 10px 0 11px; }
        .i { width:12px; height:12px; }
      </style>
      <div class="h"><span class="m"></span><span>${this.getAttribute('title')}</span><svg class="more" viewBox="0 0 7 6"><path d="M0 0l3 3-3 3zM4 0l3 3-3 3z" fill="#aaa"/></svg></div>
      <div class="b"><slot></slot></div>
      <div class="f"><svg class="i" viewBox="0 0 12 12"><circle cx="6" cy="6" r="6" fill="#888"/><path d="M5.200 5h1.600v4.500H5.200zM5.200 2.500h1.600V4H5.200z" fill="#fff"/></svg><slot name="footer"></slot></div>`;
  }
}

class FuFormRow extends HTMLElement {
  connectedCallback() {
    const split = this.hasAttribute('split');
    this.attachShadow({ mode: 'open' }).innerHTML = `
      <style>
        :host { display:grid; grid-template-columns:50px 122px; align-items:center; height:${this.getAttribute('h')}px; margin-bottom:2.800px; padding-left:10px; ${split ? 'margin-top:12px;position:relative;' : ''} }
        .c { display:flex; align-items:stretch; gap:7px; height:100%; }
        span { white-space:nowrap; }
        ${split ? '.s{position:absolute;left:4px;right:10px;top:-7px;height:1px;background:#e0e0e0}' : ''}
      </style>
      ${split ? '<div class="s"></div>' : ''}
      <span>${this.getAttribute('label')}</span><div class="c"><slot></slot></div>`;
  }
}

class FuToggleIcon extends HTMLElement {
  connectedCallback() {
    const on = this.hasAttribute('on');
    this.attachShadow({ mode: 'open' }).innerHTML = `
      <style>:host{display:flex;align-items:center;justify-content:center;width:22px;box-sizing:border-box;${on ? 'background:#d7edf8;border:1px solid #b5ddf0;border-radius:2px;' : ''}}</style><slot></slot>`;
  }
}

class FuSelection extends HTMLElement {
  constructor() {
    super();
    this.attachShadow({ mode: 'open' }).innerHTML = `
      <style>
        :host { display:block; position:relative; width:64px; box-sizing:border-box; background:#d5ebf7; border:1px solid #5cb4e2; border-radius:2px; font-size:10px; color:#444; }
        .in { display:flex; align-items:center; height:100%; padding-left:6px; white-space:nowrap; }
        .in svg { width:11px; height:15px; margin-right:3px; flex:none; }
        .x { position:absolute; left:73px; top:7px; width:8px; height:8px; }
      </style>
      <div class="in"><svg viewBox="0 0 11 15"><path d="M1 1v11l3-2.500 2 4.500 2-1-2-4.500h4z" fill="#fff" stroke="#555"/></svg><slot></slot></div>
      <svg class="x" viewBox="0 0 8 8"><path d="M.5.5l7 7M7.500.5l-7 7" stroke="#777"/></svg>`;
  }
}

class FuField extends HTMLElement {
  connectedCallback() {
    const drop = this.hasAttribute('drop');
    this.attachShadow({ mode: 'open' }).innerHTML = `
      <style>
        :host { display:flex; align-items:center; flex:1; box-sizing:border-box; background:#fff; border-radius:2px; padding-left:${drop ? 2 : 3}px; font-size:${drop ? 9.5 : 10.5}px; color:#444; position:relative; }
        ::slotted(fu-icon) { margin-right:2px; }
        svg { position:absolute; right:4px; top:50%; margin-top:-3px; width:6px; height:6px; }
      </style>
      <slot name="icon"></slot><slot></slot>
      ${drop ? '<svg viewBox="0 0 6 6"><path d="M0 1.500h6L3 5z" fill="#777"/></svg>' : ''}`;
  }
}

class FuButton extends HTMLElement {
  constructor() {
    super();
    this.attachShadow({ mode: 'open' }).innerHTML = `
      <style>:host{display:flex;align-items:center;justify-content:center;box-sizing:border-box;width:42px;height:20px;background:#f6f6f6;border:1px solid #ccc;border-radius:2px;box-shadow:0 1px 1px #ddd;font-size:9.500px;color:#444}</style><slot></slot>`;
  }
}

customElements.define('fu-icon', FuIcon);
customElements.define('fu-title-bar', FuTitleBar);
customElements.define('fu-tab-bar', FuTabBar);
customElements.define('fu-doc-tab', FuDocTab);
customElements.define('fu-avatar', FuAvatar);
customElements.define('fu-ribbon', FuRibbon);
customElements.define('fu-ribbon-tab', FuRibbonTab);
customElements.define('fu-tool-group', FuToolGroup);
customElements.define('fu-tool-active', FuToolActive);
customElements.define('fu-viewport', FuViewport);
customElements.define('fu-scene', FuScene);
customElements.define('fu-browser', FuBrowser);
customElements.define('fu-tree-row', FuTreeRow);
customElements.define('fu-current', FuCurrent);
customElements.define('fu-tooltip', FuTooltip);
customElements.define('fu-length-input', FuLengthInput);
customElements.define('fu-dialog', FuDialog);
customElements.define('fu-form-row', FuFormRow);
customElements.define('fu-toggle-icon', FuToggleIcon);
customElements.define('fu-selection', FuSelection);
customElements.define('fu-field', FuField);
customElements.define('fu-button', FuButton);
</script>
</body>
</html>
